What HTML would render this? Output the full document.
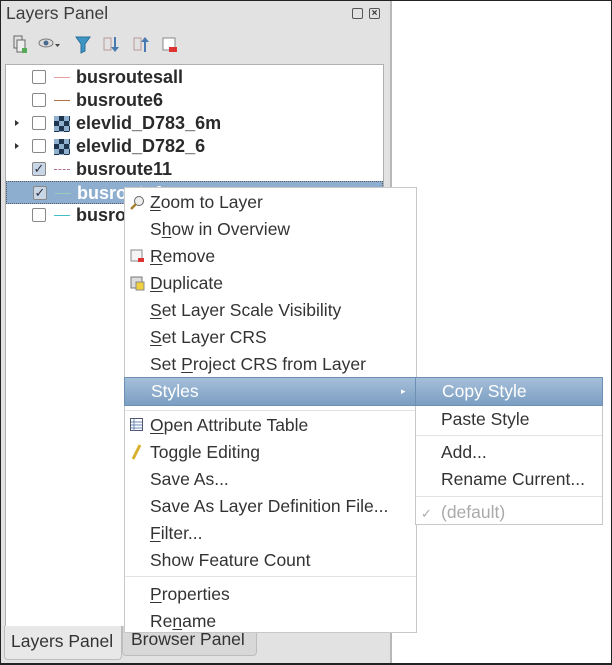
<!DOCTYPE html>
<html><head><meta charset="utf-8"><style>
*{margin:0;padding:0;box-sizing:border-box}
body{width:612px;height:665px;overflow:hidden;background:#222;font-family:"Liberation Sans","DejaVu Sans",sans-serif;position:relative}
.abs{position:absolute}
#frame{left:1px;top:1px;width:610px;height:662px;background:#e2e2e2}
#right{left:390px;top:1px;width:221px;height:662px;background:#fff;border-left:2px solid #b8b8b8}
#title{left:6px;top:3px;font-size:17.5px;color:#3c3c3c}
#tree{left:5px;top:64px;width:379px;height:563px;background:#fff;border:1px solid #b0b0b0}
.row{position:absolute;left:0;width:377px;height:23px;font-weight:bold;font-size:18px;color:#2a2a2a}
.row .t{position:absolute;left:70px;top:1px}
.cb{position:absolute;left:26px;top:4px;width:14px;height:14px;border:1px solid #888;border-radius:2px;background:#fff}
.sym{position:absolute;left:48px;top:11px;width:16px;height:1px}
.ras{position:absolute;left:48px;top:4px;width:16px;height:16px;background:
 conic-gradient(#1e3550 25%,#8fb0cf 0 50%,#1e3550 0 75%,#8fb0cf 0) 0 0/10px 10px}
.arr{position:absolute;left:9px;top:8px;width:0;height:0;border-left:4px solid #333;border-top:3px solid transparent;border-bottom:3px solid transparent}
#menu{left:124px;top:187px;width:293px;height:446px;background:#fff;border:1px solid #c8c8c8}
.mi{position:absolute;left:0;width:291px;height:27px;font-size:17.5px;color:#333}
.mi span{position:absolute;left:25px;top:3px}
.hl{background:linear-gradient(#a5bfd9,#7b9ec2);color:#fff;border:1px solid #6f90b5}
.sep{position:absolute;left:0;width:291px;height:1px;background:#e2e2e2}
#sub{left:415px;top:377px;width:188px;height:148px;background:#fff;border:1px solid #c8c8c8}
u{text-decoration:underline;text-underline-offset:2px}
.tab{position:absolute;font-size:17.5px;color:#333;border:1px solid #bdbdbd;border-top:none;border-radius:0 0 4px 4px}
</style></head><body>
<div id="frame" class="abs"></div>
<div id="right" class="abs"></div>
<div id="title" class="abs">Layers Panel</div>
<div class="abs" style="left:352px;top:8px;width:11px;height:11px;border:1px solid #555;border-radius:2px"></div>
<div class="abs" style="left:369px;top:8px;width:11px;height:11px;border:1px solid #555;border-radius:2px;font-size:10px;line-height:9px;text-align:center;font-weight:bold;color:#333">×</div>
<svg class="abs" style="left:10px;top:33px" width="170" height="22">
<rect x="4" y="3" width="8" height="12" fill="none" stroke="#666"/><rect x="7" y="7" width="8" height="12" fill="#eee" stroke="#666"/><rect x="12" y="15" width="5" height="5" fill="#5a5"/>
<ellipse cx="36" cy="10" rx="7" ry="4" fill="#ddd" stroke="#777"/><circle cx="36" cy="10" r="2.5" fill="#4a6a90"/><path d="M45 11l5 0-2.5 3z" fill="#444"/>
<path d="M66 4h14l-5 7v7l-4 2v-9z" fill="#3d95c4" stroke="#2a6f99"/>
<rect x="94" y="5" width="7" height="12" fill="none" stroke="#b99"/><path d="M104 4v10h-3l4 5 4-5h-3V4z" fill="#4a7bb0"/>
<rect x="124" y="5" width="7" height="12" fill="none" stroke="#b99"/><path d="M134 19V9h-3l4-5 4 5h-3v10z" fill="#4a7bb0"/>
<rect x="153" y="5" width="12" height="12" fill="#fff" stroke="#888"/><rect x="159" y="14" width="8" height="5" fill="#d33"/>
</svg>
<div id="tree" class="abs">
 <div class="row" style="top:1px"><div class="cb"></div><div class="sym" style="background:#e8a0a0"></div><div class="t">busroutesall</div></div>
 <div class="row" style="top:24px"><div class="cb"></div><div class="sym" style="background:#b07040"></div><div class="t">busroute6</div></div>
 <div class="row" style="top:47px"><div class="arr"></div><div class="cb"></div><div class="ras"></div><div class="t">elevlid_D783_6m</div></div>
 <div class="row" style="top:70px"><div class="arr"></div><div class="cb"></div><div class="ras"></div><div class="t">elevlid_D782_6</div></div>
 <div class="row" style="top:93px"><div class="cb" style="background:#c8d6e6;color:#334;font-size:13px;line-height:12px;text-align:center">✓</div><div class="sym" style="border-top:1px dashed #b070a0;background:none"></div><div class="t">busroute11</div></div>
 <div class="row" style="top:116px;background:#8eaed0;border:1px dotted #556"><div class="cb" style="background:#c8d6e6;color:#334;font-size:13px;line-height:12px;text-align:center">✓</div><div class="sym" style="background:#9cb"></div><div class="t" style="color:#fff">busroute1</div></div>
 <div class="row" style="top:139px"><div class="cb"></div><div class="sym" style="background:#40c0c8"></div><div class="t">busroute2</div></div>
</div>
<div class="tab" style="left:4px;top:626px;width:118px;height:34px;background:#e8e8e8;padding:5px 0 0 6px">Layers Panel</div>
<div class="tab" style="left:122px;top:626px;width:135px;height:30px;background:#d8d8d8;padding:3px 0 0 8px">Browser Panel</div>
<div id="menu" class="abs">
 <div class="mi" style="top:1px"><svg class="abs" style="left:4px;top:6px" width="16" height="16"><circle cx="10" cy="6" r="4.5" fill="#eee" stroke="#666"/><path d="M7 9l-5 5" stroke="#a78030" stroke-width="2.5"/></svg><span><u>Z</u>oom to Layer</span></div>
 <div class="mi" style="top:28px"><span>S<u>h</u>ow in Overview</span></div>
 <div class="mi" style="top:55px"><svg class="abs" style="left:5px;top:6px" width="16" height="16"><rect x="1" y="1" width="11" height="11" fill="#f4f4f4" stroke="#888"/><rect x="8" y="9" width="6" height="4" fill="#d33"/></svg><span><u>R</u>emove</span></div>
 <div class="mi" style="top:82px"><svg class="abs" style="left:5px;top:6px" width="16" height="16"><rect x="1" y="1" width="11" height="11" fill="#ddd" stroke="#777"/><rect x="6" y="6" width="8" height="8" fill="#f0d040" stroke="#888"/></svg><span><u>D</u>uplicate</span></div>
 <div class="mi" style="top:109px"><span><u>S</u>et Layer Scale Visibility</span></div>
 <div class="mi" style="top:136px"><span><u>S</u>et Layer CRS</span></div>
 <div class="mi" style="top:163px"><span>Set <u>P</u>roject CRS from Layer</span></div>
 <div class="mi hl" style="top:189px;height:29px;width:293px;left:-1px"><span style="left:26px">Styles</span><span style="left:276px;font-size:9px;top:8px">▸</span></div>
 <div class="sep" style="top:222px"></div>
 <div class="mi" style="top:224px"><svg class="abs" style="left:5px;top:6px" width="14" height="14"><rect x="0.5" y="0.5" width="12" height="12" fill="#fff" stroke="#557"/><path d="M1 4h11M1 7h11M1 10h11M4 1v12" stroke="#6a8ab0"/></svg><span><u>O</u>pen Attribute Table</span></div>
 <div class="mi" style="top:251px"><svg class="abs" style="left:5px;top:4px" width="14" height="20"><path d="M10 2L3 16" stroke="#d8b030" stroke-width="3"/></svg><span>Toggle Editing</span></div>
 <div class="mi" style="top:278px"><span>Save As...</span></div>
 <div class="mi" style="top:305px"><span>Save As Layer Definition File...</span></div>
 <div class="mi" style="top:332px"><span><u>F</u>ilter...</span></div>
 <div class="mi" style="top:359px"><span>Show Feature Count</span></div>
 <div class="sep" style="top:388px"></div>
 <div class="mi" style="top:393px"><span><u>P</u>roperties</span></div>
 <div class="mi" style="top:420px"><span>Re<u>n</u>ame</span></div>
</div>
<div id="sub" class="abs">
 <div class="mi hl" style="top:-1px;left:-1px;width:188px;height:29px"><span style="left:26px">Copy Style</span></div>
 <div class="mi" style="top:28px;width:186px"><span>Paste Style</span></div>
 <div class="sep" style="top:57px;width:186px"></div>
 <div class="mi" style="top:61px;width:186px"><span>Add...</span></div>
 <div class="mi" style="top:88px;width:186px"><span>Rename Current...</span></div>
 <div class="sep" style="top:118px;width:186px"></div>
 <div class="mi" style="top:121px;width:186px;color:#aaa"><span style="left:5px;font-size:13px;top:7px">✓</span><span>(default)</span></div>
</div>
</body></html>
